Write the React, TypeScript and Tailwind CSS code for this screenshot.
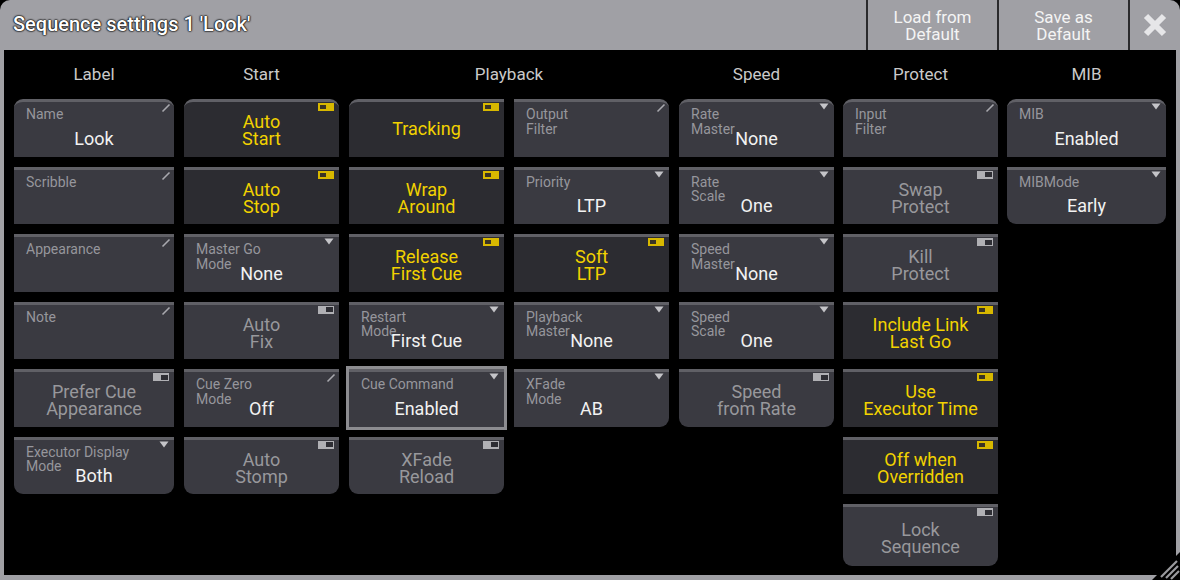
import React from "react";

type Icon = "pencil" | "dd" | "on" | "off" | "none";

interface BtnProps {
  label?: string;
  value?: string;
  text?: string;
  tone?: "on" | "off";
  icon: Icon;
  round?: string;
  tall?: boolean;
  selected?: boolean;
}

function Indicator({ icon }: { icon: Icon }) {
  if (icon === "pencil")
    return (
      <svg className="absolute right-[3px] top-[1px]" width="10" height="10" viewBox="0 0 10 10">
        <line x1="1.5" y1="8.5" x2="8.5" y2="1.5" stroke="#a8a8ae" strokeWidth="1.6" />
      </svg>
    );
  if (icon === "dd")
    return (
      <svg className="absolute right-[5px] top-[1px]" width="10" height="7" viewBox="0 0 10 7">
        <polygon points="0.5,0.5 9.5,0.5 5,6.5" fill="#c4c4c8" />
      </svg>
    );
  if (icon === "on")
    return (
      <div className="absolute right-[5px] top-[1px] w-[16px] h-[8px] bg-[#d8b800] border border-[#d8b800] flex items-center pl-[1px]">
        <div className="w-[6px] h-[4px] bg-[#3a3424]" />
      </div>
    );
  if (icon === "off")
    return (
      <div className="absolute right-[5px] top-[1px] w-[16px] h-[8px] bg-[#b0b0b4] flex items-center justify-end pr-[1px]">
        <div className="w-[7px] h-[5px] bg-[#2e2e34]" />
      </div>
    );
  return null;
}

function Btn({ label, value, text, tone, icon, round = "", tall, selected }: BtnProps) {
  const bg = tone === "on" ? "bg-[#2c2c31]" : "bg-[#3a3a41]";
  const single = text !== undefined && !text.includes("\n");
  return (
    <div
      className={`relative ${tall ? "h-[62px]" : "h-[57.5px]"} ${bg} border-t-[3px] border-[#606066] ${round} ${
        selected ? "outline-[3px] outline-solid outline-[#8c8c90]" : ""
      }`}
    >
      <Indicator icon={icon} />
      {label && (
        <div className="absolute left-[12px] top-[5px] text-[14px] leading-[14.5px] text-[#96969c] whitespace-pre">
          {label}
        </div>
      )}
      {value && (
        <div className="absolute inset-x-0 bottom-[7px] text-center text-[18px] leading-[22px] text-[#f2f2f2]">
          {value}
        </div>
      )}
      {text && (
        <div
          className={`h-full flex items-center justify-center text-center text-[18px] leading-[17px] whitespace-pre ${
            single ? "pb-[2px]" : "pt-[2px]"
          } ${tone === "on" ? "text-[#f2d200]" : "text-[#98989c]"}`}
        >
          {text}
        </div>
      )}
    </div>
  );
}

function Header({ children }: { children: React.ReactNode }) {
  return (
    <div className="h-[49px] flex items-center justify-center text-[17px] text-[#cacaca]">{children}</div>
  );
}

const TOP = "rounded-t-[9px]";
const BOT = "rounded-b-[9px]";

export default function App() {
  return (
    <div className="w-[1180px] h-[580px] bg-black" style={{ fontFamily: "Roboto, 'Noto Sans', sans-serif" }}>
      <div className="relative w-full h-full bg-[#a0a0a5] rounded-t-[10px] flex flex-col overflow-hidden">
        {/* Title bar */}
        <div className="h-[50px] flex items-stretch">
          <div className="flex-1 pl-[13px] pt-[9px] text-[20px] font-medium text-white [text-shadow:0_0_2px_#111,0_0_2px_#111,0_0_1px_#000,0_0_1px_#000]">
            Sequence settings 1 'Look'
          </div>
          <div className="w-[2px] bg-[#2a2a2c]" />
          <div className="w-[129px] flex items-center justify-center text-center text-[17px] leading-[17px] text-[#f4f4f4] pt-[1px]">
            Load from
            <br />
            Default
          </div>
          <div className="w-[2px] bg-[#2a2a2c]" />
          <div className="w-[129px] flex items-center justify-center text-center text-[17px] leading-[17px] text-[#f4f4f4] pt-[1px]">
            Save as
            <br />
            Default
          </div>
          <div className="w-[2px] bg-[#2a2a2c]" />
          <div className="w-[50px] flex items-center justify-center pb-[1px]">
            <svg width="24" height="24" viewBox="0 0 24 24">
              <path d="M3 3 L21 21 M21 3 L3 21" stroke="#e6e6e8" strokeWidth="6" strokeLinecap="butt" />
            </svg>
          </div>
        </div>

        {/* Content */}
        <div className="mx-[4px] h-[525px] bg-black flex px-[10px]">
          {/* Label */}
          <div className="w-[160px] flex flex-col">
            <Header>Label</Header>
            <div className="flex flex-col gap-[10px]">
              <Btn label="Name" value="Look" icon="pencil" round={TOP} />
              <Btn label="Scribble" icon="pencil" />
              <Btn label="Appearance" icon="pencil" />
              <Btn label="Note" icon="pencil" />
              <Btn text={"Prefer Cue\nAppearance"} tone="off" icon="off" />
              <Btn label={"Executor Display\nMode"} value="Both" icon="dd" round={BOT} />
            </div>
          </div>

          {/* Start */}
          <div className="w-[155px] ml-[10px] flex flex-col">
            <Header>Start</Header>
            <div className="flex flex-col gap-[10px]">
              <Btn text={"Auto\nStart"} tone="on" icon="on" round={TOP} />
              <Btn text={"Auto\nStop"} tone="on" icon="on" />
              <Btn label={"Master Go\nMode"} value="None" icon="dd" />
              <Btn text={"Auto\nFix"} tone="off" icon="off" />
              <Btn label={"Cue Zero\nMode"} value="Off" icon="pencil" />
              <Btn text={"Auto\nStomp"} tone="off" icon="off" round={BOT} />
            </div>
          </div>

          {/* Playback */}
          <div className="w-[320px] ml-[10px] flex flex-col">
            <Header>Playback</Header>
            <div className="flex gap-[10px]">
              <div className="w-[155px] flex flex-col gap-[10px]">
                <Btn text="Tracking" tone="on" icon="on" round="rounded-tl-[9px]" />
                <Btn text={"Wrap\nAround"} tone="on" icon="on" />
                <Btn text={"Release\nFirst Cue"} tone="on" icon="on" />
                <Btn label={"Restart\nMode"} value="First Cue" icon="dd" />
                <Btn label="Cue Command" value="Enabled" icon="dd" selected />
                <Btn text={"XFade\nReload"} tone="off" icon="off" round={BOT} />
              </div>
              <div className="w-[155px] flex flex-col gap-[10px]">
                <Btn label={"Output\nFilter"} icon="pencil" round="rounded-tr-[9px]" />
                <Btn label="Priority" value="LTP" icon="dd" />
                <Btn text={"Soft\nLTP"} tone="on" icon="on" />
                <Btn label={"Playback\nMaster"} value="None" icon="dd" />
                <Btn label={"XFade\nMode"} value="AB" icon="dd" round="rounded-br-[9px]" />
              </div>
            </div>
          </div>

          {/* Speed */}
          <div className="w-[155px] ml-[10px] flex flex-col">
            <Header>Speed</Header>
            <div className="flex flex-col gap-[10px]">
              <Btn label={"Rate\nMaster"} value="None" icon="dd" round={TOP} />
              <Btn label={"Rate\nScale"} value="One" icon="dd" />
              <Btn label={"Speed\nMaster"} value="None" icon="dd" />
              <Btn label={"Speed\nScale"} value="One" icon="dd" />
              <Btn text={"Speed\nfrom Rate"} tone="off" icon="off" round={BOT} />
            </div>
          </div>

          {/* Protect */}
          <div className="w-[155px] ml-[9px] flex flex-col">
            <Header>Protect</Header>
            <div className="flex flex-col gap-[10px]">
              <Btn label={"Input\nFilter"} icon="pencil" round={TOP} />
              <Btn text={"Swap\nProtect"} tone="off" icon="off" />
              <Btn text={"Kill\nProtect"} tone="off" icon="off" />
              <Btn text={"Include Link\nLast Go"} tone="on" icon="on" />
              <Btn text={"Use\nExecutor Time"} tone="on" icon="on" />
              <Btn text={"Off when\nOverridden"} tone="on" icon="on" />
              <Btn text={"Lock\nSequence"} tone="off" icon="off" round={BOT} tall />
            </div>
          </div>

          {/* MIB */}
          <div className="w-[159px] ml-[9px] flex flex-col">
            <Header>MIB</Header>
            <div className="flex flex-col gap-[10px]">
              <Btn label="MIB" value="Enabled" icon="dd" round={TOP} />
              <Btn label="MIBMode" value="Early" icon="dd" round={BOT} />
            </div>
          </div>
        </div>

        {/* Resize grip */}
        <svg className="absolute right-0 bottom-0" width="32" height="32" viewBox="0 0 32 32">
          <polygon points="32,4 32,32 4,32" fill="#000" />
          <path d="M13 29 L29 13 M18 30 L30 18 M23 31 L31 23" stroke="#9a9a9e" strokeWidth="2.2" />
        </svg>
      </div>
    </div>
  );
}
